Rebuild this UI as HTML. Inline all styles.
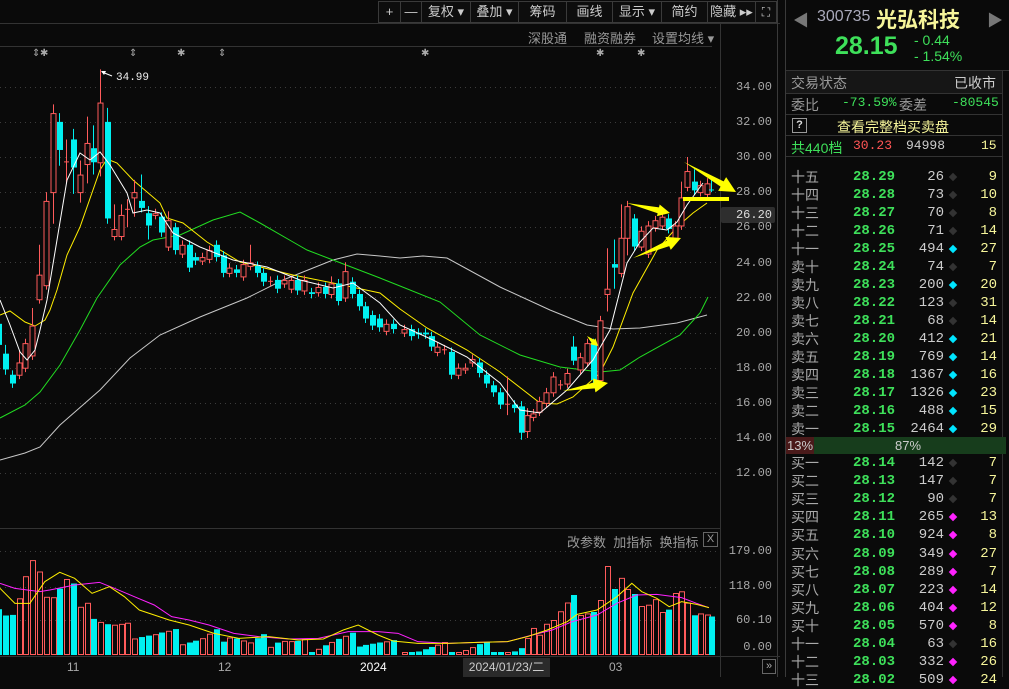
<!DOCTYPE html>
<html><head><meta charset="utf-8">
<style>
*{margin:0;padding:0;box-sizing:border-box}
body{width:1009px;height:677px;background:#0a0a0a;overflow:hidden;position:relative;font-family:"Liberation Sans","Noto Sans CJK SC",sans-serif;color:#bbb}
.a{position:absolute;white-space:nowrap}
.tb{position:absolute;top:1px;height:22px;border:1px solid #3a3a3a;color:#ccc;font-size:13px;line-height:20px;text-align:center;background:#0d0d0d}
.ax{position:absolute;left:722px;width:50px;text-align:right;font-family:"Liberation Mono",monospace;font-size:12px;color:#a8a8a8}
.row{position:absolute;left:786px;width:216px;height:18px;font-size:14px;line-height:18px}
.row span{position:absolute}
.lb{left:5px;color:#aaa}
.pr{left:67px;color:#3ee05a;font-family:"Liberation Mono",monospace;font-weight:bold}
.vo{right:58px;color:#ccc;font-family:"Liberation Mono",monospace}
.dm{left:164px;top:6px;width:6px;height:6px;transform:rotate(45deg)}
.ct{right:5px;color:#f6f59a;font-family:"Liberation Mono",monospace}
</style></head><body>
<svg id="ch" class="a" style="left:0;top:0" width="1009" height="677"></svg>

<div class="tb" style="left:378px;width:23px">+</div>
<div class="tb" style="left:400px;width:22px">—</div>
<div class="tb" style="left:421px;width:50px">复权 ▾</div>
<div class="tb" style="left:470px;width:49px">叠加 ▾</div>
<div class="tb" style="left:518px;width:49px">筹码</div>
<div class="tb" style="left:566px;width:47px">画线</div>
<div class="tb" style="left:612px;width:50px">显示 ▾</div>
<div class="tb" style="left:661px;width:47px">简约</div>
<div class="tb" style="left:707px;width:49px">隐藏 ▸▸</div>
<div class="tb" style="left:755px;width:22px;font-size:12px">⛶</div>
<div class="a" style="left:528px;top:28px;font-size:13px;color:#999">深股通</div>
<div class="a" style="left:584px;top:28px;font-size:13px;color:#999">融资融券</div>
<div class="a" style="left:652px;top:28px;font-size:13px;color:#999">设置均线 ▾</div>

<div class="ax" style="top:80px">34.00</div>
<div class="ax" style="top:115px">32.00</div>
<div class="ax" style="top:150px">30.00</div>
<div class="ax" style="top:185px">28.00</div>
<div class="a" style="left:721px;top:207px;width:54px;height:16px;background:#2e2e2e;border-radius:2px"></div>
<div class="ax" style="top:208px;color:#ddd">26.20</div>
<div class="ax" style="top:220px">26.00</div>
<div class="ax" style="top:256px">24.00</div>
<div class="ax" style="top:291px">22.00</div>
<div class="ax" style="top:326px">20.00</div>
<div class="ax" style="top:361px">18.00</div>
<div class="ax" style="top:396px">16.00</div>
<div class="ax" style="top:431px">14.00</div>
<div class="ax" style="top:466px">12.00</div>
<div class="ax" style="top:544px">179.00</div>
<div class="ax" style="top:579px">118.00</div>
<div class="ax" style="top:613px">60.10</div>
<div class="ax" style="top:640px">0.00</div>
<div class="a" style="left:567px;top:532px;font-size:13px;color:#999">改参数&nbsp; 加指标&nbsp; 换指标</div>
<div class="a" style="left:703px;top:532px;width:15px;height:15px;border:1px solid #666;color:#999;font-size:11px;line-height:13px;text-align:center">X</div>
<div class="a" style="left:67px;top:660px;font-size:12px;color:#aaa">11</div>
<div class="a" style="left:218px;top:660px;font-size:12px;color:#aaa">12</div>
<div class="a" style="left:360px;top:660px;font-size:12px;color:#fff">2024</div>
<div class="a" style="left:463px;top:658px;width:87px;height:19px;background:#2a2a2a;font-size:12px;color:#ccc;line-height:19px;text-align:center">2024/01/23/二</div>
<div class="a" style="left:609px;top:660px;font-size:12px;color:#aaa">03</div>
<div class="a" style="left:762px;top:659px;width:14px;height:15px;border:1px solid #666;color:#aaa;font-size:11px;line-height:13px;text-align:center">»</div>

<div class="a" style="left:793px;top:7px;color:#777;font-size:16px">◀</div>
<div class="a" style="left:817px;top:8px;color:#aab;font-size:16px">300735</div>
<div class="a" style="left:876px;top:4px;color:#f6f59a;font-size:21px;font-weight:bold">光弘科技</div>
<div class="a" style="left:987px;top:7px;color:#777;font-size:16px">▶</div>
<div class="a" style="left:835px;top:32px;color:#3ee05a;font-size:25px;font-weight:bold">28.15</div>
<div class="a" style="left:914px;top:32px;color:#3ee05a;font-size:14px">- 0.44</div>
<div class="a" style="left:914px;top:48px;color:#3ee05a;font-size:14px">- 1.54%</div>
<div class="a" style="left:786px;top:71px;width:216px;height:22px;background:#161616"></div>
<div class="a" style="left:791px;top:73px;font-size:14px;color:#999">交易状态</div>
<div class="a" style="left:954px;top:73px;font-size:14px;color:#ccc">已收市</div>
<div class="a" style="left:791px;top:95px;font-size:14px;color:#999">委比</div>
<div class="a" style="left:842px;top:95px;font-size:13px;color:#3ee05a;font-family:'Liberation Mono',monospace">-73.59%</div>
<div class="a" style="left:899px;top:95px;font-size:14px;color:#999">委差</div>
<div class="a" style="left:952px;top:95px;font-size:13px;color:#3ee05a;font-family:'Liberation Mono',monospace">-80545</div>
<div class="a" style="left:792px;top:118px;width:15px;height:15px;border:1px solid #999;color:#ddd;font-size:11px;line-height:13px;text-align:center;font-weight:bold">?</div>
<div class="a" style="left:837px;top:117px;font-size:14px;color:#f6f59a">查看完整档买卖盘</div>
<div class="a" style="left:791px;top:138px;font-size:14px;color:#3ee05a">共440档</div>
<div class="a" style="left:853px;top:138px;font-size:13px;color:#ff5555;font-family:'Liberation Mono',monospace">30.23</div>
<div class="a" style="left:906px;top:138px;font-size:13px;color:#ccc;font-family:'Liberation Mono',monospace">94998</div>
<div class="a" style="left:981px;top:138px;font-size:13px;color:#f6f59a;font-family:'Liberation Mono',monospace">15</div>
<div class="a" style="left:786px;top:437px;width:220px;height:17px;background:#173d1c"></div>
<div class="a" style="left:786px;top:437px;width:28px;height:17px;background:#4a1a1a"></div>
<div class="a" style="left:787px;top:437px;font-size:13px;color:#ccc;line-height:17px">13%</div>
<div class="a" style="left:895px;top:437px;font-size:13px;color:#ccc;line-height:17px">87%</div>
<div id="ob"></div>

<script>
const NS="http://www.w3.org/2000/svg";const svg=document.getElementById('ch');
function el(t,a){const e=document.createElementNS(NS,t);for(const k in a)e.setAttribute(k,a[k]);svg.appendChild(e);return e}
function ln(x1,y1,x2,y2,c,w,d){const o={x1,y1,x2,y2,stroke:c,'stroke-width':w||1};if(d)o['stroke-dasharray']=d;el('line',o)}
ln(0,23.5,780,23.5,'#333');ln(0,46.5,712,46.5,'#333');
ln(720.5,24,720.5,677,'#333');ln(777.5,0,777.5,677,'#3a3a3a');ln(785.5,0,785.5,677,'#3a3a3a');
ln(0,528.5,720,528.5,'#333');ln(0,656.5,780,656.5,'#333');
ln(786,70.5,1009,70.5,'#333');ln(786,93.5,1002,93.5,'#333');ln(786,114.5,1002,114.5,'#333');ln(786,135.5,1002,135.5,'#333');ln(786,156.5,1002,156.5,'#333');
ln(1002.5,70,1002.5,677,'#333');
const Y=p=>157+(30-p)*17.56;
for(let p=12;p<=34;p+=2)ln(0,Math.round(Y(p))+.5,718,Math.round(Y(p))+.5,'#3c3c3c',1,'1,4');
[551,587,620].forEach(y=>ln(0,y+.5,718,y+.5,'#3c3c3c',1,'1,4'));
[[36,'⇕'],[44,'✱'],[133,'⇕'],[181,'✱'],[222,'⇕'],[425,'✱'],[600,'✱'],[641,'✱']].forEach(m=>{const t=el('text',{x:m[0]-4,y:56,fill:'#aaa','font-size':'10','font-family':'DejaVu Sans'});t.textContent=m[1]});
function pl(pts,c){el('polyline',{points:pts.map(p=>p.join(',')).join(' '),fill:'none',stroke:c,'stroke-width':1})}
pl([[0,460],[25,453],[40,447],[60,425],[100,390],[130,358],[160,335],[200,317],[247,298],[283,280],[333,260],[357,254],[380,256],[400,258],[423,256],[447,258],[500,287],[550,310],[587,325],[613,329],[640,328],[677,323],[707,315]],'#c8c8c8');
pl([[0,418],[25,405],[40,392],[60,365],[80,330],[97,298],[120,265],[140,247],[153,240],[180,235],[213,220],[240,212],[260,223],[293,242],[307,250],[333,260],[380,278],[400,286],[440,302],[480,335],[520,355],[560,367],[600,372],[620,370],[640,357],[680,335],[700,313],[708,297]],'#22dd22');
pl([[0,315],[10,311],[25,322],[35,326],[45,320],[50,310],[57,290],[67,255],[80,227],[100,170],[107,159],[117,163],[133,180],[160,203],[167,218],[183,223],[207,242],[240,262],[293,275],[333,283],[380,293],[400,309],[427,328],[467,350],[500,372],[540,403],[557,404],[573,397],[600,373],[613,347],[633,293],[657,250],[677,227],[693,213],[707,203]],'#ffee00');
const C=[[20.5,19.3],[18.8,17.9,19.3,17.6],[17.6,17.1],[17.6,18.3,19],[18,19.4],[18.7,20.4,21.4],
[21.9,23.3,25],[22.7,27.5,28],[28,32.5,33,26.2],[32,30.4,32.5,29.5],[29.7,29.75,31,28.5],[31,29.4,31.6,27.9],[28,29,29.8,27.4],[29.6,30.8,32.3,28.5],[30.5,29.7,31.8,29],[29.7,33.1,34.99,28.9],[32,26.5,32.8,26.2],[25.5,25.9,27.3],[25.5,26.7,27.3],[27,27.05,27.6,26],[27.7,28,28.7,26.6],
[27.5,27.1,29],[26.8,26.1,27.2,25.3],[26.7,26.8],[26.6,25.7],[24.9,26.4,26.9],[26,24.7],[24.5,25],[25,23.7],[24.3,24.1],[24.1,24.3],[24.2,24.7],[25,24.3],[24.4,23.4],[23.4,23.7],[23.6,23.4],[23.2,23.9],[23.8,24,25],[23.8,23.4],[23.4,22.9],[22.9,22.95],[23,22.5],[22.8,23],[22.5,23],[23,22.4],[22.4,23],[22.3,22.2],
[22.3,22.6],[22.6,22.2],[22.2,22.8,23.2],[22.8,21.8],[22,23.5,24],[22.9,22.2],[22.2,21.5],[21.5,20.8],[21,20.4],[20.8,20.3],[20.1,20.5],[20.5,20.2]];
const D=[[404,20,20.2],[411,20.2,19.8],[418,20,19.9],[425,20,19.9],[431,19.8,19.2],[437,18.9,19.2],[444,19,19.05],[451,18.9,17.6],[458,17.6,18],[465,17.9,18],[472,18.3,18.5],[479,18.3,17.7],[486,17.6,17.1],[493,17,16.6],[500,16.6,15.9],[507,15.9,15.95,17.5,15.3],[514,15.9,15.7],[521,15.8,14.3,16.1,13.9],[527,14.4,15.3,15.7,14],[533,15.2,15.4],[539,15.5,16.1],[546,16,16.6],[553,16.6,17.5],[560,17,17.05],[567,17.1,17.7],[573,19.2,18.4,19.8],[580,17.9,18.6],[587,18.3,19.4],[593,19.4,17.3],[600,17.3,20.7],[607,22.2,22.5,24.8,21.2],[614,23.9,23.7,25.3,22.5],[621,23.4,25.4,27.3],[627,25.4,27.2,27.5,24.4],[634,26.5,24.9],[641,24.9,25.8],[648,24.5,26.1],[655,26,26.4],[662,26.1,26.6],[668,26.5,25.9],[675,25.4,26.1],[681,26.1,27.7,28.6],[687,28.3,29.2,30],[694,28.6,28.1,29.3],[700,28,28.4],[707,27.9,28.5,28.8],[711,28.2,28.15,28.7,28]];
const all=C.map((c,i)=>[-1.8+6.8*i].concat(c)).concat(D);
const RED='#ff5b5b',CY='#00f0f0';
all.forEach(c=>{let [x,o,cl,h,l]=c;x=Math.round(x);const up=cl>o;const hi=h||Math.max(o,cl)+0.25,lo=l||Math.min(o,cl)-0.25;
 const col=up?RED:CY;const yt=Y(Math.max(o,cl)),yb=Y(Math.min(o,cl));
 ln(x+.5,Y(hi),x+.5,Y(lo),col);
 if(Math.abs(o-cl)<0.1){ln(x-2,Y(cl)+.5,x+3,Y(cl)+.5,col)}
 else if(up)el('rect',{x:x-2,y:yt+.5,width:5,height:yb-yt,fill:'#0a0a0a',stroke:col,'stroke-width':1});
 else el('rect',{x:x-2,y:yt,width:6,height:yb-yt,fill:col});
 c.push(up);});
pl([[0,300],[10,325],[20,352],[27,360],[35,350],[40,330],[47,300],[67,180],[80,153],[90,160],[100,152],[110,165],[127,193],[133,213],[147,210],[160,213],[173,233],[200,247],[233,260],[267,267],[300,280],[333,288],[353,283],[380,303],[400,325],[433,340],[467,357],[500,383],[520,410],[540,413],[567,390],[593,360],[610,330],[627,263],[640,242],[653,228],[667,230],[677,222],[687,205],[703,183]],'#ffffff');
const prof=[[0,603],[10,615],[20,595],[30,560],[40,580],[50,595],[60,585],[70,575],[80,612],[90,610],[100,618],[110,625],[130,630],[160,635],[200,640],[230,632],[250,645],[280,638],[300,646],[330,642],[360,640],[400,648],[440,650],[480,648],[520,652],[540,627],[553,620],[573,595],[580,615],[593,612],[600,600],[607,566],[614,589],[620,576],[627,589],[634,594],[641,606],[647,606],[654,597],[661,612],[667,612],[675,593],[682,591],[688,605],[695,617],[702,612],[712,617]];
function pv(x){for(let i=0;i<prof.length-1;i++){if(x>=prof[i][0]&&x<=prof[i+1][0]){const t=(x-prof[i][0])/(prof[i+1][0]-prof[i][0]);return prof[i][1]+t*(prof[i+1][1]-prof[i][1])}}return 617}
all.forEach((c,i)=>{const x=Math.round(c[0]);let top=pv(x);if(x<540)top+=((i*37)%13-6)*1.3;top=Math.min(top,652);const up=c[c.length-1];
 if(up)el('rect',{x:x-2+.5,y:top+.5,width:5,height:654-top,fill:'none',stroke:RED,'stroke-width':1});
 else el('rect',{x:x-2,y:top,width:6,height:655-top,fill:CY});});
const vy=[[0,190],[30,235],[60,235],[90,170],[120,142],[150,160],[185,205],[220,185],[250,215],[280,255],[310,270],[340,285],[380,300],[430,325],[480,340],[540,335],[600,345],[650,342],[690,315],[720,300],[760,330],[790,348],[840,355],[900,355],[960,352],[1020,350],[1060,335],[1100,315],[1140,290],[1160,268],[1200,255],[1240,215],[1270,175],[1290,200],[1320,220],[1345,245],[1370,230],[1400,238],[1425,248]];
const vm=[[0,175],[30,190],[80,200],[100,195],[150,180],[200,172],[230,190],[270,215],[310,240],[345,275],[380,285],[420,300],[470,325],[520,335],[580,342],[640,340],[700,320],[760,320],[800,325],[840,350],[900,355],[960,352],[1020,350],[1070,330],[1110,315],[1150,290],[1200,270],[1240,235],[1280,210],[1320,208],[1370,218],[1400,235],[1425,248]];
const cv=a=>a.map(p=>[p[0]/2.01,525+p[1]/3]);
pl(cv(vm),'#ff22ff');pl(cv(vy),'#ffee00');
pl([[102,72],[112,76]],'#fff');el('polygon',{points:'101,71 106,71 104,75',fill:'#fff'});
const pt=el('text',{x:116,y:80,fill:'#eee','font-size':'11','font-family':'Liberation Mono'});pt.textContent='34.99';
function arrow(x1,y1,x2,y2,w,hw,hl){const dx=x2-x1,dy=y2-y1,L=Math.hypot(dx,dy),ux=dx/L,uy=dy/L,nx=-uy,ny=ux;
 const bx=x2-ux*hl,by=y2-uy*hl;
 el('polygon',{points:[[x1,y1],[bx+nx*w,by+ny*w],[bx+nx*hw,by+ny*hw],[x2,y2],[bx-nx*hw,by-ny*hw],[bx-nx*w,by-ny*w]].map(p=>p.join(',')).join(' '),fill:'#ffff00'})}
arrow(563,391,608,383,3,7,14);arrow(587,336,598,346,2,4,7);arrow(627,203,670,213,3,6,12);arrow(633,258,681,238,3,7,14);arrow(684,162,736,192,3,8,16);
el('rect',{x:683,y:197,width:46,height:4,fill:'#ffff00'});
const S=[['十五','28.29',26,0,9],['十四','28.28',73,0,10],['十三','28.27',70,0,8],['十二','28.26',71,0,14],['十一','28.25',494,1,27],['卖十','28.24',74,0,7],['卖九','28.23',200,1,20],['卖八','28.22',123,0,31],['卖七','28.21',68,0,14],['卖六','28.20',412,1,21],['卖五','28.19',769,1,14],['卖四','28.18',1367,1,16],['卖三','28.17',1326,1,23],['卖二','28.16',488,1,15],['卖一','28.15',2464,1,29]];
const B=[['买一','28.14',142,0,7],['买二','28.13',147,0,7],['买三','28.12',90,0,7],['买四','28.11',265,2,13],['买五','28.10',924,2,8],['买六','28.09',349,2,27],['买七','28.08',289,2,7],['买八','28.07',223,2,14],['买九','28.06',404,2,12],['买十','28.05',570,2,8],['十一','28.04',63,0,16],['十二','28.03',332,2,26],['十三','28.02',509,2,24]];
let h='';const dc=['#333','#00e5ff','#ff22ff'];
function row(r,y){h+=`<div class="row" style="top:${y}px"><span class="lb">${r[0]}</span><span class="pr">${r[1]}</span><span class="vo">${r[2]}</span><span class="dm" style="background:${dc[r[3]]}"></span><span class="ct">${r[4]}</span></div>`}
S.forEach((r,i)=>row(r,168+18*i));B.forEach((r,i)=>row(r,454+18.1*i));
document.getElementById('ob').innerHTML=h;
</script>
</body></html>
